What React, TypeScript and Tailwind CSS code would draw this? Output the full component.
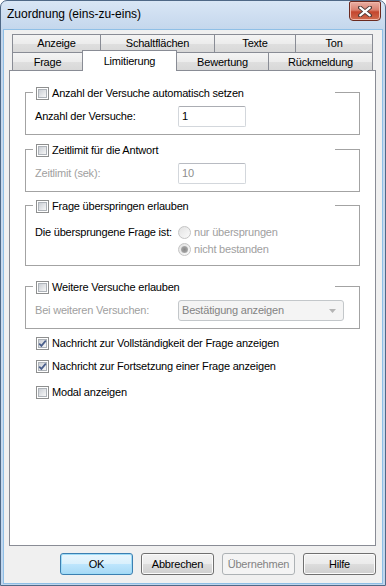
import React from "react";

function CheckBox({ checked }: { checked?: boolean }) {
  return (
    <span className="relative block w-[13px] h-[13px] shrink-0 border border-[#8e8f8f] bg-white">
      <span className="absolute left-[1px] top-[1px] w-[9px] h-[9px] border border-[#aeb3b9] bg-[linear-gradient(135deg,#cbcfd5,#f7f7f7)]" />
      {checked && (
        <svg className="absolute left-0 top-0" width="11" height="11" viewBox="0 0 11 11">
          <path d="M2.2 5.6 L4.4 7.9 L8.8 2.6" fill="none" stroke="#4a5f8c" strokeWidth="1.7" />
        </svg>
      )}
    </span>
  );
}

function Radio({ checked }: { checked?: boolean }) {
  return (
    <span className="relative flex items-center justify-center w-[13px] h-[13px] shrink-0 rounded-full border border-[#c4c4c4] bg-[linear-gradient(135deg,#e2e2e2,#fbfbfb)]">
      {checked && (
        <span className="w-[7px] h-[7px] rounded-full bg-[radial-gradient(circle,#8a8a8a_0%,#9d9d9d_50%,#c8c8c8_100%)]" />
      )}
    </span>
  );
}

function Group({
  h,
  label,
  children,
}: {
  h: string;
  label: string;
  children?: React.ReactNode;
}) {
  return (
    <div className={"relative shrink-0 border border-[#a3a3a3] " + h}>
      <div className="absolute left-[7px] top-[-6px] w-[302px] h-[13px] bg-white pl-[3px] flex items-center gap-[3px] leading-[13px]">
        <CheckBox />
        <span>{label}</span>
      </div>
      {children}
    </div>
  );
}

const tabBg =
  "border-[#898c95] bg-[linear-gradient(to_bottom,#f4f4f4,#ececec_50%,#dfdfdf_50%,#d8d8d8)]";

function Tab({
  w,
  label,
  last,
  row2,
}: {
  w: string;
  label: string;
  last?: boolean;
  row2?: boolean;
}) {
  return (
    <div
      className={
        "h-[18px] flex items-center justify-center border-t border-l " +
        tabBg +
        " " +
        w +
        (last ? " border-r" : "") +
        (row2 ? " pt-[2px]" : "")
      }
    >
      {label}
    </div>
  );
}

function Button({
  label,
  kind,
}: {
  label: string;
  kind: "default" | "normal" | "disabled";
}) {
  const base =
    "w-[73px] h-[22px] rounded-[3px] border flex items-center justify-center";
  const cls =
    kind === "default"
      ? "border-[#3c7fb1] bg-[linear-gradient(to_bottom,#eaf6fd,#d9f0fc_50%,#bee6fd_50%,#a7d9f5)] shadow-[inset_0_0_0_1px_#9fdcf7]"
      : kind === "normal"
      ? "border-[#707070] bg-[linear-gradient(to_bottom,#f2f2f2,#ebebeb_50%,#dddddd_50%,#cfcfcf)] shadow-[inset_0_0_0_1px_#fbfbfb]"
      : "border-[#adb2b5] bg-[#f4f4f4] text-[#838383]";
  return <div className={base + " " + cls}>{label}</div>;
}

function CloseButton() {
  return (
    <div className="ml-auto mr-[4px] mt-0 w-[32px] h-[20px] rounded-b-[4px] rounded-t-[2px] border border-[#6b2a20] bg-[linear-gradient(to_bottom,#eab0a4,#d97f6e_45%,#c4462e_55%,#cf6b4f)] shadow-[inset_0_0_0_1px_#f1b8ab] flex items-center justify-center">
      <svg width="14" height="11" viewBox="0 0 14 11">
        <path d="M2 1.5 L12 9.5 M12 1.5 L2 9.5" stroke="#4c3a37" strokeWidth="4" strokeLinecap="round" />
        <path d="M2.2 1.7 L11.8 9.3 M11.8 1.7 L2.2 9.3" stroke="#ffffff" strokeWidth="2.2" strokeLinecap="round" />
      </svg>
    </div>
  );
}

export default function App() {
  return (
    <div className="w-[386px] h-[586px] flex flex-col overflow-hidden rounded-t-[7px] border border-[#4f6886] bg-[linear-gradient(to_bottom,#d9e6f5_0px,#c3d6ec_30px,#c9dbef_60%,#bfd6ee_100%)] font-['Liberation_Sans',Arial,sans-serif] text-[11px] tracking-[-0.2px] text-black">
      <div className="h-[29px] flex shrink-0">
        <div className="pl-[6px] pt-[6px] text-[12px] tracking-normal leading-[15px]">
          Zuordnung (eins-zu-eins)
        </div>
        <CloseButton />
      </div>
      <div className="flex-1 mx-[3px] mb-[2px] bg-[#f0f0f0] flex flex-col pl-[5px] pr-[6px] pt-[4px] shadow-[0_0_0_1px_#8fbfe6]">
        <div className="flex ml-[3px]">
          <Tab w="w-[88px]" label="Anzeige" />
          <Tab w="w-[114px]" label="Schaltflächen" />
          <Tab w="w-[81px]" label="Texte" />
          <Tab w="w-[78px]" label="Ton" last />
        </div>
        <div className="flex items-end ml-[3px] h-[18px] relative z-10">
          <Tab w="w-[70px]" label="Frage" row2 />
          <div className="w-[95px] h-[21px] -mb-px flex items-center justify-center border-t border-l border-r border-[#898c95] bg-white">
            Limitierung
          </div>
          <div
            className={
              "w-[91px] h-[18px] pt-[2px] flex items-center justify-center border-t " +
              tabBg
            }
          >
            Bewertung
          </div>
          <Tab w="w-[105px]" label="Rückmeldung" last row2 />
        </div>
        <div className="h-[476px] shrink-0 border border-[#898c95] bg-white flex flex-col pt-[21px] px-[15px]">
          <Group h="h-[43px]" label="Anzahl der Versuche automatisch setzen">
            <div className="flex items-center pt-[13px] pl-[9px]">
              <span className="w-[143px]">Anzahl der Versuche:</span>
              <div className="w-[68px] h-[21px] border border-[#d3d7dc] border-t-[#abadb3] rounded-[2px] bg-white flex items-center pl-[3px]">
                1
              </div>
            </div>
          </Group>
          <div className="mt-[14px]">
            <Group h="h-[43px]" label="Zeitlimit für die Antwort">
              <div className="flex items-center pt-[13px] pl-[9px] text-[#a0a0a0]">
                <span className="w-[143px]">Zeitlimit (sek):</span>
                <div className="w-[68px] h-[21px] border border-[#d3d7dc] border-t-[#b8bbc2] rounded-[2px] bg-white flex items-center pl-[3px] text-[#8d8d8d]">
                  10
                </div>
              </div>
            </Group>
          </div>
          <div className="mt-[13px]">
            <Group h="h-[61px]" label="Frage überspringen erlauben">
              <div className="flex flex-col pt-[18px] pl-[9px]">
                <div className="flex items-center h-[17px]">
                  <span className="w-[143px]">Die übersprungene Frage ist:</span>
                  <Radio />
                  <span className="ml-[3px] text-[#a0a0a0]">nur übersprungen</span>
                </div>
                <div className="flex items-center h-[17px]">
                  <span className="w-[143px]" />
                  <Radio checked />
                  <span className="ml-[3px] text-[#a0a0a0]">nicht bestanden</span>
                </div>
              </div>
            </Group>
          </div>
          <div className="mt-[20px]">
            <Group h="h-[43px]" label="Weitere Versuche erlauben">
              <div className="flex items-center pt-[13px] pl-[9px]">
                <span className="w-[143px] text-[#a0a0a0]">Bei weiteren Versuchen:</span>
                <div className="w-[166px] h-[21px] border border-[#c3c7ca] rounded-[3px] bg-[#f4f4f4] flex items-center pl-[3px] text-[#838383]">
                  <span>Bestätigung anzeigen</span>
                  <svg className="ml-auto mr-[7px]" width="7" height="4" viewBox="0 0 7 4">
                    <path d="M0 0 L7 0 L3.5 4 Z" fill="#b4b4b4" />
                  </svg>
                </div>
              </div>
            </Group>
          </div>
          <div className="flex items-center gap-[3px] h-[13px] mt-[8px] pl-[11px]">
            <CheckBox checked />
            <span>Nachricht zur Vollständigkeit der Frage anzeigen</span>
          </div>
          <div className="flex items-center gap-[3px] h-[13px] mt-[10px] pl-[11px]">
            <CheckBox checked />
            <span>Nachricht zur Fortsetzung einer Frage anzeigen</span>
          </div>
          <div className="flex items-center gap-[3px] h-[13px] mt-[13px] pl-[11px]">
            <CheckBox />
            <span>Modal anzeigen</span>
          </div>
        </div>
        <div className="flex justify-end gap-[8px] mt-[7px]">
          <Button label="OK" kind="default" />
          <Button label="Abbrechen" kind="normal" />
          <Button label="Übernehmen" kind="disabled" />
          <Button label="Hilfe" kind="normal" />
        </div>
      </div>
    </div>
  );
}
